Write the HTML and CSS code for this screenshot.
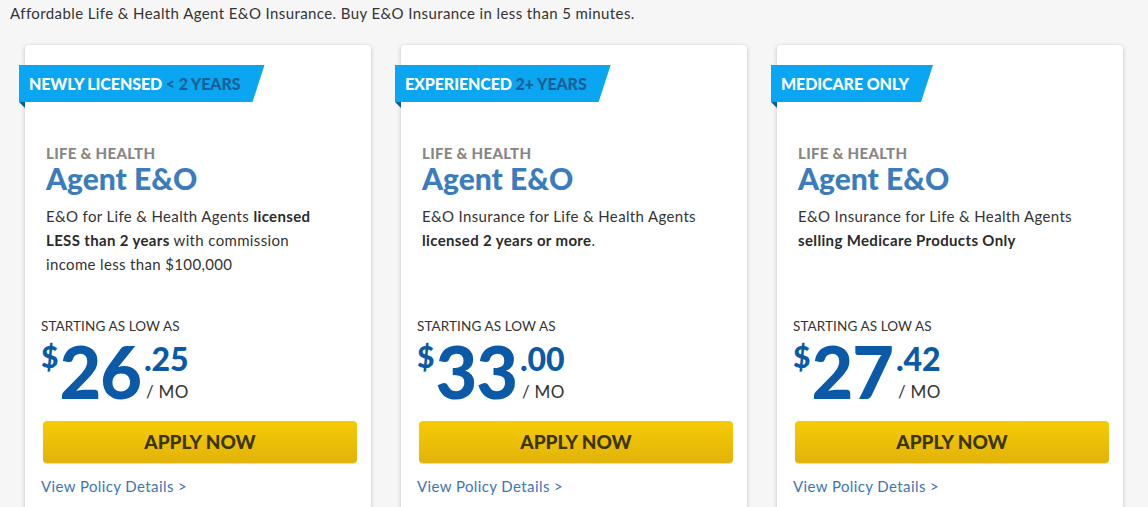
FILE: index.html
```html
<!DOCTYPE html>
<html>
<head>
<meta charset="utf-8">
<link rel="stylesheet" href="styles.css">
</head>
<body>
<p class="intro">Affordable Life &amp; Health Agent E&amp;O Insurance. Buy E&amp;O Insurance in less than 5 minutes.</p>
<div class="cards">
  <div class="card">
    <div class="ribbon"><div class="ribbon-label">NEWLY LICENSED <span class="dim">&lt; 2 YEARS</span></div><span class="fold"></span></div>
    <div class="body">
      <div class="kicker">LIFE &amp; HEALTH</div>
      <h2 class="title">Agent E&amp;O</h2>
      <p class="desc">E&amp;O for Life &amp; Health Agents <b>licensed LESS than 2 years</b> with commission income less than $100,000</p>
    </div>
    <div class="pricing">
      <div class="from">STARTING AS LOW AS</div>
      <div class="price"><span class="cur">$</span><span class="whole">26</span><span class="side"><span class="cents">.25</span><span class="per">/ MO</span></span></div>
      <a class="apply">APPLY NOW</a>
      <a class="details">View Policy Details &gt;</a>
    </div>
  </div>
  <div class="card">
    <div class="ribbon"><div class="ribbon-label">EXPERIENCED <span class="dim">2+ YEARS</span></div><span class="fold"></span></div>
    <div class="body">
      <div class="kicker">LIFE &amp; HEALTH</div>
      <h2 class="title">Agent E&amp;O</h2>
      <p class="desc">E&amp;O Insurance for Life &amp; Health Agents <b>licensed 2 years or more</b>.</p>
    </div>
    <div class="pricing">
      <div class="from">STARTING AS LOW AS</div>
      <div class="price"><span class="cur">$</span><span class="whole">33</span><span class="side"><span class="cents">.00</span><span class="per">/ MO</span></span></div>
      <a class="apply">APPLY NOW</a>
      <a class="details">View Policy Details &gt;</a>
    </div>
  </div>
  <div class="card">
    <div class="ribbon"><div class="ribbon-label">MEDICARE ONLY</div><span class="fold"></span></div>
    <div class="body">
      <div class="kicker">LIFE &amp; HEALTH</div>
      <h2 class="title">Agent E&amp;O</h2>
      <p class="desc">E&amp;O Insurance for Life &amp; Health Agents <b>selling Medicare Products Only</b></p>
    </div>
    <div class="pricing">
      <div class="from">STARTING AS LOW AS</div>
      <div class="price"><span class="cur">$</span><span class="whole">27</span><span class="side"><span class="cents">.42</span><span class="per">/ MO</span></span></div>
      <a class="apply">APPLY NOW</a>
      <a class="details">View Policy Details &gt;</a>
    </div>
  </div>
</div>
</body>
</html>
```
FILE: styles.css
```css
html, body {
  margin: 0;
  padding: 0;
  background: #f6f6f6;
  font-family: Lato, "Liberation Sans", sans-serif;
  color: #333;
  overflow: hidden;
}
.intro {
  margin: 0;
  padding: 4px 10px 0;
  font-size: 15px;
  letter-spacing: 0.4px;
  line-height: 18px;
  color: #333;
}
.cards {
  display: flex;
  gap: 30px;
  padding-left: 25px;
  margin-top: 23px;
}
.card {
  width: 346px;
  height: 490px;
  background: #fff;
  border-radius: 4px;
  box-shadow: 0 1px 4px rgba(0,0,0,0.22);
  display: flex;
  flex-direction: column;
}
.ribbon {
  margin: 20px 0 0 -6px;
  display: flex;
  flex-direction: column;
  align-items: flex-start;
}
.ribbon-label {
  height: 37px;
  line-height: 37px;
  background: #0ba6f2;
  color: #fff;
  font-weight: 900;
  font-size: 16px;
  letter-spacing: -0.1px;
  padding: 0 24px 0 10px;
  clip-path: polygon(0 0, 100% 0, calc(100% - 12px) 100%, 0 100%);
}
.ribbon-label .dim {
  color: #1a5f97;
}
.fold {
  width: 0;
  height: 0;
  border-top: 6px solid #0b5e96;
  border-left: 6px solid transparent;
}
.body {
  padding: 36px 30px 0 21px;
}
.kicker {
  font-size: 15px;
  font-weight: 900;
  color: #878787;
  letter-spacing: 0.3px;
  line-height: 18px;
}
.title {
  margin: 0;
  font-size: 30px;
  font-weight: 900;
  color: #3b7cbd;
  line-height: 32px;
}
.desc {
  margin: 10px 0 0;
  font-size: 15px;
  letter-spacing: 0.35px;
  line-height: 24px;
  color: #333;
  height: 72px;
}
.desc b {
  font-weight: 700;
  color: #2b2b2b;
}
.pricing {
  padding: 42px 14px 0 16px;
}
.from {
  font-size: 13.5px;
  letter-spacing: 0.1px;
  line-height: 16px;
  color: #333;
}
.price {
  display: flex;
  align-items: flex-start;
  color: #0b5aa8;
  font-weight: 900;
  margin-top: 2px;
  height: 85px;
}
.cur {
  font-size: 30px;
  line-height: 30px;
  margin-top: 5px;
}
.whole {
  font-size: 72px;
  line-height: 70px;
  letter-spacing: -1px;
  margin-left: 1px;
}
.side {
  display: flex;
  flex-direction: column;
  margin-left: 3px;
}
.cents {
  font-size: 32px;
  line-height: 34px;
  margin-top: 6px;
}
.per {
  font-size: 17px;
  font-weight: 400;
  color: #333;
  line-height: 20px;
  letter-spacing: 0.3px;
  margin-top: 6px;
  margin-left: 2px;
}
.apply {
  display: block;
  margin: 0 0 0 2px;
  height: 42px;
  line-height: 42px;
  text-align: center;
  border-radius: 4px;
  background: linear-gradient(#f6cb05, #e1b30a);
  box-shadow: 0 1px 1px rgba(0,0,0,0.15);
  color: #3b3500;
  font-weight: 900;
  font-size: 19px;
}
.details {
  display: block;
  margin-top: 13px;
  font-size: 15px;
  letter-spacing: 0.4px;
  color: #3f74b1;
  line-height: 20px;
}
```
